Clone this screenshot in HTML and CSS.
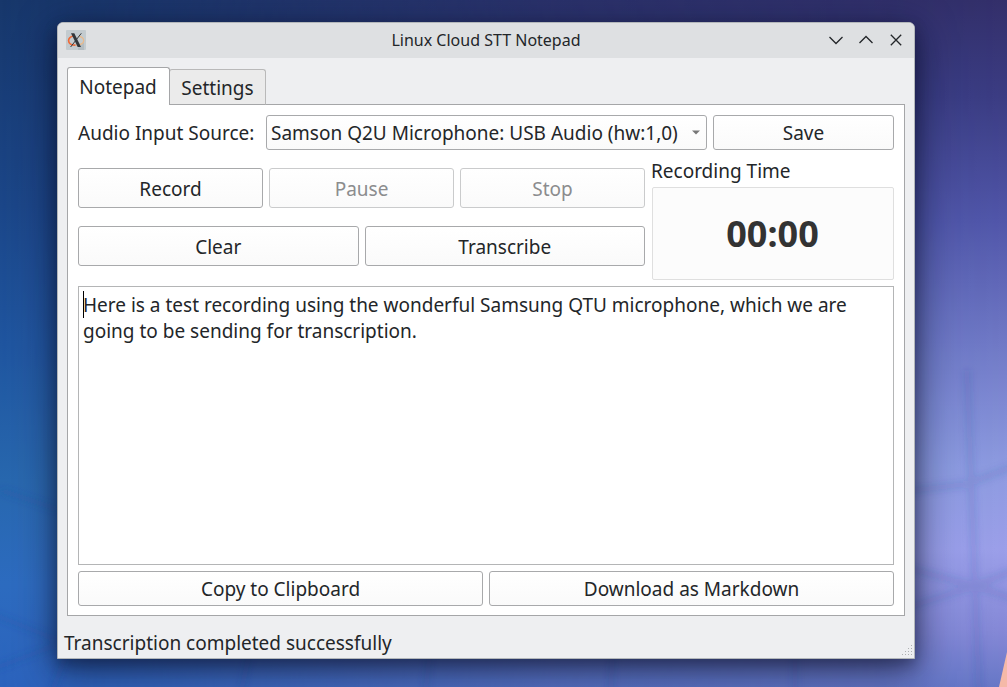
FILE: index.html
```html
<!DOCTYPE html>
<html lang="en">
<head>
<meta charset="utf-8">
<title>Linux Cloud STT Notepad</title>
<link rel="stylesheet" href="styles.css">
</head>
<body>
<div class="desktop">
  <svg class="wallpaper" viewBox="0 0 1007 687" preserveAspectRatio="none" aria-hidden="true">
    <defs>
      <linearGradient id="left" x2="0" y2="1">
        <stop offset="0" stop-color="#17376b"/><stop offset=".3" stop-color="#1b4688"/>
        <stop offset=".5" stop-color="#1f559f"/><stop offset=".7" stop-color="#2767ae"/>
        <stop offset=".85" stop-color="#2c6bbf"/><stop offset="1" stop-color="#2b63bd"/>
      </linearGradient>
      <linearGradient id="right" x2="0" y2="1">
        <stop offset="0" stop-color="#332f6a"/><stop offset=".14" stop-color="#3b3c83"/>
        <stop offset=".32" stop-color="#5156a9"/><stop offset=".5" stop-color="#7079c6"/>
        <stop offset=".68" stop-color="#8e9be0"/><stop offset=".8" stop-color="#9c9fe9"/>
        <stop offset=".92" stop-color="#8588d6"/><stop offset="1" stop-color="#6777c6"/>
      </linearGradient>
      <linearGradient id="fade">
        <stop offset="0" stop-color="#fff" stop-opacity="0"/><stop offset=".15" stop-color="#fff" stop-opacity=".15"/>
        <stop offset=".55" stop-color="#fff" stop-opacity=".7"/><stop offset="1" stop-color="#fff"/>
      </linearGradient>
      <mask id="blend"><rect width="1007" height="687" fill="url(#fade)"/></mask>
      <filter id="soft" x="-10%" y="-10%" width="120%" height="120%"><feGaussianBlur stdDeviation="3.5"/></filter>
    </defs>
    <rect width="1007" height="687" fill="url(#left)"/>
    <rect width="1007" height="687" fill="url(#right)" mask="url(#blend)"/>
    <g fill="none" stroke="#26418f" stroke-opacity=".14" stroke-width="7" filter="url(#soft)">
      <path d="M-10 613L70 645L50 697M-10 670L70 640M0 490L60 510M240 697L250 650M425 697L430 650M610 697L613 650M795 697V650"/>
      <path d="M967 370L975 586L979 697M900 566L975 586L1017 600M900 610L975 586L1017 569M900 492L967 484L1017 465"/>
    </g>
    <path d="M1007 652L999 687H1007Z" fill="#f5b9a8"/>
  </svg>

  <main class="window">
    <header class="titlebar">
      <svg class="app-icon" viewBox="0 0 20 20" aria-hidden="true">
        <rect width="20" height="20" rx="1" fill="#c3cbcf"/>
        <path d="M12 18L18 12V20H12Z" fill="#b3bcc1"/>
        <path d="M7.500 6C4.500 6.700 2.600 8.500 2.600 10.700C2.600 13.300 5.500 15.200 9.500 15.200" fill="none" stroke="#ef6a37" stroke-width="1.700"/>
        <path d="M10 15.200C14.500 15.200 17.700 13.200 17.700 10.700C17.700 8.700 16 7 13 6.200" fill="none" stroke="#e9b98a" stroke-width="1.300"/>
        <path d="M5 3.300H8.300L15 17H11.700Z" fill="#31363b"/>
        <path d="M15.300 3.300L4.600 17" stroke="#31363b" stroke-width="1"/>
      </svg>
      <h1 class="title">Linux Cloud STT Notepad</h1>
      <div class="window-controls">
        <svg viewBox="0 0 18 18"><path d="M2.500 6L9 12.500L15.500 6"/></svg>
        <svg viewBox="0 0 18 18"><path d="M2.500 12L9 5.500L15.500 12"/></svg>
        <svg viewBox="0 0 18 18"><path d="M3.800 3.800L14.200 14.200M14.200 3.800L3.800 14.200"/></svg>
      </div>
    </header>

    <nav class="tabs">
      <div class="tab tab-active">Notepad</div>
      <div class="tab">Settings</div>
    </nav>

    <section class="pane">
      <div class="source-row">
        <span class="source-label">Audio Input Source:</span>
        <div class="combo"><span>Samson Q2U Microphone: USB Audio (hw:1,0)</span>
          <svg class="arrow" viewBox="0 0 8 5"><path d="M0 0.500H8L4 4.500Z" fill="#777"/></svg>
        </div>
        <button class="button save">Save</button>
      </div>

      <div class="control-row">
        <div class="controls">
          <div class="button-row">
            <button class="button">Record</button>
            <button class="button" disabled>Pause</button>
            <button class="button" disabled>Stop</button>
          </div>
          <div class="button-row">
            <button class="button">Clear</button>
            <button class="button">Transcribe</button>
          </div>
        </div>
        <div class="timer">
          <div class="timer-label">Recording Time</div>
          <div class="timer-box">00:00</div>
        </div>
      </div>

      <div class="editor"><span class="caret"></span>Here is a test recording using the wonderful Samsung QTU microphone, which we are<br>going to be sending for transcription.</div>

      <div class="button-row export-row">
        <button class="button">Copy to Clipboard</button>
        <button class="button">Download as Markdown</button>
      </div>
    </section>

    <footer class="statusbar">
      <span>Transcription completed successfully</span>
      <svg class="grip" viewBox="0 0 12 12" fill="#aeb0b2"><path d="M9 0h1v1h-1zM6 3h1v1h-1zM9 3h1v1h-1zM3 6h1v1h-1zM6 6h1v1h-1zM9 6h1v1h-1zM0 9h1v1h-1zM3 9h1v1h-1zM6 9h1v1h-1zM9 9h1v1h-1z"/></svg>
    </footer>
  </main>
</div>
</body>
</html>
```
FILE: styles.css
```css
* { box-sizing: border-box; }
body { margin: 0; font-family: "Noto Sans", sans-serif; font-size: 19px; line-height: 26px; color: #232629; }
.desktop { position: relative; width: 1007px; height: 687px; overflow: hidden; }
.wallpaper { display: block; width: 100%; height: 100%; }
.window {
  position: absolute; left: 57px; top: 22px; width: 858px; height: 637px;
  display: flex; flex-direction: column;
  background: #eeeff1; border: 1px solid #b3b7ba; border-radius: 6px 6px 0 0;
  box-shadow: 0 10px 36px 2px rgba(8, 12, 36, .62), 0 6px 14px rgba(8, 12, 36, .3);
}
.titlebar {
  display: grid; grid-template-columns: 90px 1fr 90px; align-items: center;
  height: 35px; flex: none; padding: 0 8px 1px; background: #dee0e2; border-radius: 5px 5px 0 0;
}
.app-icon { width: 20px; height: 20px; }
.title { margin: 0; font-size: 16px; font-weight: 400; line-height: 22px; text-align: center; }
.window-controls { display: flex; gap: 12px; justify-content: flex-end; padding-right: 1px; }
.window-controls svg { width: 18px; height: 18px; flex: none; fill: none; stroke: #232629; stroke-width: 1.3; }
.tabs { display: flex; align-items: flex-end; height: 47px; flex: none; padding-left: 9px; position: relative; z-index: 1; margin-bottom: -1px; }
.tab {
  width: 97px; height: 36px; margin-left: -1px; padding-top: 5px; text-align: center; white-space: nowrap;
  background: #ebebeb; border: 1px solid #b9b9b9; border-bottom-color: #a5a6a8; border-radius: 3px 3px 0 0;
}
.tab-active { width: 103px; height: 38px; margin-left: 0; padding: 6px 1px 0 0; background: #fff; border-color: #a5a6a8; border-bottom: 0; z-index: 1; }
.pane {
  display: flex; flex-direction: column; height: 512px; flex: none; margin: 0 9px; padding: 10px 10px 9px;
  background: #fff; border: 1px solid #a5a6a8;
}
.source-row { display: flex; gap: 6px; height: 35px; align-items: center; }
.source-label { width: 182px; white-space: nowrap; }
.button, .combo {
  border: 1px solid #a8a9ab; border-radius: 3px; background: linear-gradient(#fff, #fafafa);
  font: inherit; color: inherit;
}
.button { padding: 0; text-align: center; }
.button:disabled { color: #8b8c8e; border-color: #cacbcc; }
.combo { display: flex; align-items: center; justify-content: space-between; width: 441px; height: 35px; padding: 0 6px 0 4px; white-space: nowrap; }
.arrow { width: 8px; height: 5px; }
.save { width: 181px; height: 35px; }
.control-row { display: flex; gap: 7px; height: 130px; }
.controls { display: flex; flex-direction: column; gap: 18px; width: 567px; padding-top: 18px; }
.controls .button { padding-top: 2px; }
.button-row { display: flex; gap: 6px; height: 40px; }
.button-row .button { flex: 1; }
.timer { width: 242px; padding-top: 8px; }
.timer-label { height: 29px; margin-left: -1px; }
.timer-box {
  display: flex; align-items: center; justify-content: center; height: 93px; padding-right: 1px;
  background: #fcfcfc; border: 1px solid #dfdfdf; border-radius: 2px; font-size: 36px; font-weight: 700; color: #333;
}
.editor { position: relative; height: 279px; flex: none; margin-top: 6px; padding: 5px 4px; border: 1px solid #b4b5b6; white-space: nowrap; }
.caret { position: absolute; left: 4px; top: 4px; width: 1px; height: 27px; background: #000; }
.export-row { height: 35px; margin-top: 6px; }
.statusbar { display: flex; justify-content: space-between; flex: 1; padding: 14px 0 0 6px; }
.grip { width: 12px; height: 12px; align-self: flex-end; margin-bottom: 1px; }
```
